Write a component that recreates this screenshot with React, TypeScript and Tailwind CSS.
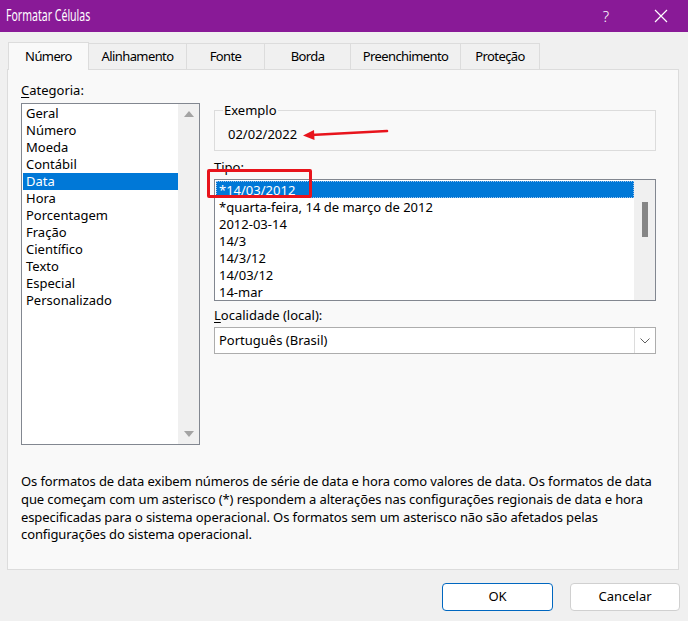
import React from "react";

const FONT = { fontFamily: "'Noto Sans', 'Open Sans', sans-serif" };

const categories = [
  "Geral",
  "Número",
  "Moeda",
  "Contábil",
  "Data",
  "Hora",
  "Porcentagem",
  "Fração",
  "Científico",
  "Texto",
  "Especial",
  "Personalizado",
];

const tipos = [
  "*14/03/2012",
  "*quarta-feira, 14 de março de 2012",
  "2012-03-14",
  "14/3",
  "14/3/12",
  "14/03/12",
  "14-mar",
];

const tabs = ["Número", "Alinhamento", "Fonte", "Borda", "Preenchimento", "Proteção"];
const tabWidths = [81, 98, 78, 86, 110, 79];

export default function App() {
  return (
    <div
      className="w-[688px] h-[621px] bg-[#f0f0f0] flex flex-col text-[13px] text-black overflow-hidden"
      style={FONT}
    >
      {/* Title bar */}
      <div className="h-[32px] bg-[#891a97] flex items-center text-white shrink-0">
        <div className="pl-[6px] flex-1">
          <div className="text-[15.5px] origin-left scale-x-[0.68] whitespace-nowrap">Formatar Células</div>
        </div>
        <div className="w-[30px] text-center text-[15px] mr-[25px] font-light">?</div>
        <div className="w-[30px] flex justify-center mr-[12px]">
          <svg width="14" height="14" viewBox="0 0 14 14">
            <path d="M1 1 L13 13 M13 1 L1 13" stroke="white" strokeWidth="1.2" fill="none" />
          </svg>
        </div>
      </div>

      {/* Tabs */}
      <div className="px-[8px] pt-[9px] shrink-0">
        <div className="flex items-end h-[28px] tracking-[-0.6px]">
          {tabs.map((t, i) => (
            <div
              key={t}
              style={{ width: tabWidths[i] }}
              className={
                i === 0
                  ? "h-[28px] bg-[#f9f9f9] border border-[#dcdcdc] border-b-0 flex items-center justify-center relative z-10 -mb-[1px] pt-[1px]"
                  : "h-[26px] bg-[#f0f0f0] border border-[#dcdcdc] border-l-0 border-b-0 flex items-center justify-center pt-[1px]"
              }
            >
              {t}
            </div>
          ))}
        </div>
      </div>

      {/* Panel */}
      <div className="mx-[7px] mr-[9px] h-[501px] bg-[#f9f9f9] border border-[#dcdcdc] shrink-0 flex flex-col">
        <div className="flex pt-[12px] pl-[13px] gap-[14px]">
          {/* Left column */}
          <div className="w-[179px] flex flex-col">
            <div className="h-[17px] leading-[17px]">
              <span className="underline underline-offset-2">C</span>ategoria:
            </div>
            <div className="mt-[4px] h-[342px] bg-white border border-[#828790] flex">
              <div className="flex-1 pt-[1px] pl-[1px]">
                {categories.map((c) => (
                  <div
                    key={c}
                    className={
                      c === "Data"
                        ? "h-[17px] leading-[17px] pl-[3px] bg-[#0078d7] text-white"
                        : "h-[17px] leading-[17px] pl-[3px]"
                    }
                  >
                    {c}
                  </div>
                ))}
              </div>
              <div className="w-[21px] bg-[#f0f0f0] flex flex-col items-center justify-between py-[7px]">
                <svg width="10" height="6" viewBox="0 0 10 6">
                  <path d="M0 6 L5 0 L10 6 Z" fill="#a3a3a3" />
                </svg>
                <svg width="10" height="6" viewBox="0 0 10 6">
                  <path d="M0 0 L10 0 L5 6 Z" fill="#a3a3a3" />
                </svg>
              </div>
            </div>
          </div>

          {/* Right column */}
          <div className="w-[442px] flex flex-col relative">
            <fieldset className="mt-[21px] h-[48px] border border-[#dcdcdc] px-[8px] relative">
              <legend className="px-[1px] leading-[14px]">Exemplo</legend>
              <div className="pl-[5px] mt-[9px] leading-[17px]">02/02/2022</div>
              <svg
                className="absolute left-[88px] top-[11px]"
                width="86"
                height="12"
                viewBox="0 0 86 12"
              >
                <path d="M8 7 L84 3" stroke="#e8141c" strokeWidth="2.6" strokeLinecap="round" />
                <path d="M0 7.5 L11 2 L11.5 12 Z" fill="#e8141c" />
              </svg>
            </fieldset>

            <div className="mt-[8px] h-[17px] leading-[17px]">Tipo:</div>
            <div className="mt-[3px] h-[122px] bg-white border border-[#828790] flex">
              <div className="flex-1 pt-[1px] pl-[1px]">
                {tipos.map((t, i) => (
                  <div
                    key={t}
                    className={
                      i === 0
                        ? "h-[17px] leading-[16px] pl-[2px] bg-[#0078d7] text-white border border-dotted border-[#9ec4ec]"
                        : "h-[17px] leading-[18px] pl-[3px]"
                    }
                  >
                    {t}
                  </div>
                ))}
              </div>
              <div className="w-[21px] bg-[#f0f0f0] flex justify-center pt-[22px]">
                <div className="w-[6px] h-[35px] bg-[#868686]" />
              </div>
            </div>

            {/* red highlight box */}
            <div className="absolute left-[-7px] top-[87px] w-[105px] h-[29px] border-[3px] border-[#e8141c] rounded-[2px] pointer-events-none" />

            <div className="mt-[6px] h-[17px] leading-[17px]">
              <span className="underline underline-offset-2">L</span>ocalidade (local):
            </div>
            <div className="mt-[3px] h-[27px] bg-white border border-[#adadad] flex items-center">
              <div className="flex-1 pl-[4px]">Português (Brasil)</div>
              <div className="w-[21px] h-full border-l border-[#dcdcdc] flex items-center justify-center">
                <svg width="10" height="6" viewBox="0 0 10 6">
                  <path d="M0.5 0.5 L5 5 L9.5 0.5" stroke="#606060" strokeWidth="1" fill="none" />
                </svg>
              </div>
            </div>
          </div>
        </div>

        <div className="mt-[28px] pl-[13px] pr-[4px] leading-[17.8px] tracking-[-0.1px] whitespace-nowrap">
          Os formatos de data exibem números de série de data e hora como valores de data. Os formatos de data
          <br />
          que começam com um asterisco (*) respondem a alterações nas configurações regionais de data e hora
          <br />
          especificadas para o sistema operacional. Os formatos sem um asterisco não são afetados pelas
          <br />
          configurações do sistema operacional.
        </div>
      </div>

      {/* Buttons */}
      <div className="flex justify-end gap-[17px] pr-[8px] mt-[13px]">
        <div className="w-[111px] h-[28px] bg-white border border-[#0067c0] rounded-[4px] flex items-center justify-center">
          OK
        </div>
        <div className="w-[110px] h-[28px] bg-white border border-[#d0d0d0] rounded-[4px] flex items-center justify-center">
          Cancelar
        </div>
      </div>
    </div>
  );
}
